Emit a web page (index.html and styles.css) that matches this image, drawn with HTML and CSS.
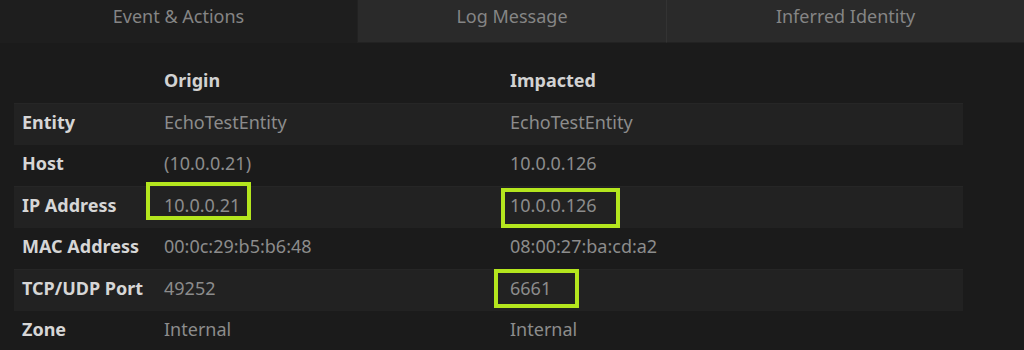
FILE: index.html
```html
<!DOCTYPE html>
<html>
<head>
<meta charset="utf-8">
<link rel="stylesheet" href="styles.css">
</head>
<body>
<div class="tabs">
  <div class="tab active">Event &amp; Actions</div>
  <div class="tab">Log Message</div>
  <div class="tab">Inferred Identity</div>
</div>
<div class="table">
  <div class="row head">
    <div class="cell"></div>
    <div class="cell">Origin</div>
    <div class="cell">Impacted</div>
  </div>
  <div class="row stripe">
    <div class="cell label">Entity</div>
    <div class="cell val">EchoTestEntity</div>
    <div class="cell val">EchoTestEntity</div>
  </div>
  <div class="row">
    <div class="cell label">Host</div>
    <div class="cell val">(10.0.0.21)</div>
    <div class="cell val">10.0.0.126</div>
  </div>
  <div class="row stripe">
    <div class="cell label">IP Address</div>
    <div class="cell val"><span class="hl hl-a">10.0.0.21</span></div>
    <div class="cell val"><span class="hl hl-b">10.0.0.126</span></div>
  </div>
  <div class="row">
    <div class="cell label">MAC Address</div>
    <div class="cell val">00:0c:29:b5:b6:48</div>
    <div class="cell val">08:00:27:ba:cd:a2</div>
  </div>
  <div class="row stripe">
    <div class="cell label">TCP/UDP Port</div>
    <div class="cell val">49252</div>
    <div class="cell val"><span class="hl hl-c">6661</span></div>
  </div>
  <div class="row">
    <div class="cell label">Zone</div>
    <div class="cell val">Internal</div>
    <div class="cell val">Internal</div>
  </div>
</div>
</body>
</html>
```
FILE: styles.css
```css
html, body {
  margin: 0;
  padding: 0;
  background: #1b1b1b;
  font-family: "Noto Sans", "Open Sans", sans-serif;
  width: 1024px;
  height: 350px;
  overflow: hidden;
}
.tabs {
  display: flex;
  height: 43px;
}
.tab {
  display: flex;
  justify-content: center;
  align-items: flex-start;
  padding-top: 4px;
  box-sizing: border-box;
  font-size: 18px;
  color: #858585;
  background: #2a2a2a;
  border-bottom: 1px solid #222;
}
.tab:nth-child(1) { width: 357px; }
.tab:nth-child(2) { width: 310px; border-left: 1px solid #222; border-right: 1px solid #333; }
.tab:nth-child(3) { flex: 1; }
.tab.active {
  background: #1e1e1e;
  border-bottom: none;
}
.table {
  margin: 17px 0 0 14px;
  width: 949px;
}
.row {
  display: grid;
  grid-template-columns: 142px 346px 1fr;
  height: 41.5px;
  align-items: center;
}
.row.head { height: 43px; }
.row.stripe {
  background: #222222;
  box-shadow: inset 0 1px 0 #262626;
}
.cell {
  padding-left: 8px;
  font-size: 18px;
  line-height: 24px;
  margin-top: -4px;
  white-space: nowrap;
}
.head .cell {
  color: #d2d2d2;
  font-weight: bold;
}
.label {
  color: #d6d6d6;
  font-weight: bold;
}
.val {
  color: #8c8c8c;
}
.hl {
  position: relative;
}
.hl::after {
  content: "";
  position: absolute;
  border: 4px solid #b4e61e;
}
.hl-a::after { left: -18px; right: -11px; top: -11px; bottom: -3px; }
.hl-b::after { left: -9px; right: -23px; top: -5px; bottom: -11px; }
.hl-c::after { left: -16px; right: -28px; top: -7px; bottom: -8px; }
```
